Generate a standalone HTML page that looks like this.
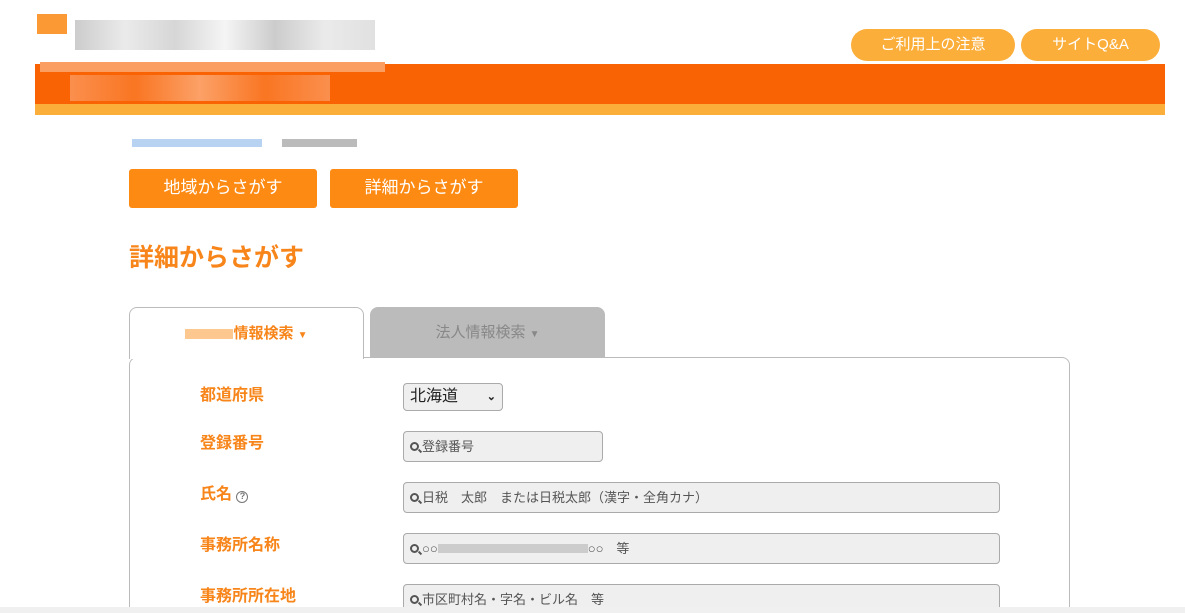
<!DOCTYPE html>
<html style="overflow:hidden;width:1185px;height:613px"><head><meta charset="utf-8"><style>
*{box-sizing:border-box;margin:0;padding:0}
body{width:1185px;height:613px;overflow:hidden;background:#fff;font-family:"Liberation Sans","Noto Sans CJK JP",sans-serif;position:relative}
.a{position:absolute}
.hb{background:#fbae3a;color:#fff;font-size:15px;border-radius:16px;text-align:center;line-height:32px;height:32px;top:29px}
.btn{background:#fc8a13;color:#fff;font-size:17px;border-radius:3px;text-align:center;line-height:37px;height:39px;top:169px;width:188px}
.lab{left:200px;color:#f7851a;font-weight:bold;font-size:16px}
.in{left:403px;border:1px solid #aaa;border-radius:4px;background:#efefef;height:31px;font-size:13px;color:#555;line-height:29px;padding-left:6px}
.in b{display:inline-block;width:9px;height:9px;border:2px solid #555;border-radius:50%;margin-right:3px;position:relative;top:0}
.in b:after{content:"";position:absolute;left:6px;top:6px;width:4px;height:2px;background:#555;transform:rotate(45deg)}
</style></head><body>
<div class="a" style="left:35px;top:64px;width:1130px;height:40px;background:#f96303"></div>
<div class="a" style="left:35px;top:104px;width:1130px;height:11px;background:#fbae3a"></div>
<div class="a" style="left:37px;top:14px;width:30px;height:20px;background:#fb9a35"></div>
<div class="a" style="left:75px;top:20px;width:300px;height:30px;background:linear-gradient(90deg,#aaa,#ddd,#bbb,#eee,#aaa,#ddd,#ccc);opacity:.6"></div>
<div class="a" style="left:40px;top:62px;width:345px;height:10px;background:#fa9e62"></div>
<div class="a" style="left:70px;top:75px;width:260px;height:26px;background:linear-gradient(90deg,#fb9a60,#f97a2a,#fcb080,#f97a2a,#fb9a60);opacity:.8"></div>
<div class="a hb" style="left:851px;width:164px">ご利用上の注意</div>
<div class="a hb" style="left:1021px;width:139px">サイトQ&amp;A</div>
<div class="a" style="left:132px;top:139px;width:130px;height:8px;background:#b8d2f2"></div>
<div class="a" style="left:282px;top:139px;width:75px;height:8px;background:#bbb"></div>
<div class="a btn" style="left:129px">地域からさがす</div>
<div class="a btn" style="left:330px">詳細からさがす</div>
<div class="a" style="left:129px;top:238px;color:#f7851a;font-size:25px;font-weight:bold">詳細からさがす</div>
<div class="a" style="left:129px;top:357px;width:941px;height:270px;border:1px solid #bbb;border-radius:8px"></div>
<div class="a" style="left:129px;top:307px;width:235px;height:52px;border:1px solid #bbb;border-bottom:none;border-radius:8px 8px 0 0;background:#fff;text-align:center;line-height:52px;color:#f7851a;font-weight:bold;font-size:15px"><span style="display:inline-block;width:48px;height:10px;background:#fcc890;vertical-align:middle"></span>情報検索 <span style="font-size:10px">▼</span></div>
<div class="a" style="left:370px;top:307px;width:235px;height:50px;border-radius:8px 8px 0 0;background:#bbb;text-align:center;line-height:52px;color:#888;font-size:15px">法人情報検索 <span style="font-size:10px">▼</span></div>
<div class="a lab" style="top:381px">都道府県</div>
<div class="a lab" style="top:429px">登録番号</div>
<div class="a lab" style="top:480px">氏名 <span style="display:inline-block;width:12px;height:12px;border:1.5px solid #777;border-radius:50%;font-size:9px;color:#777;line-height:9px;text-align:center">?</span></div>
<div class="a lab" style="top:531px">事務所名称</div>
<div class="a lab" style="top:582px">事務所所在地</div>
<div class="a in" style="top:383px;width:100px;height:28px;color:#222;font-size:16px;line-height:26px">北海道 <span style="position:absolute;right:6px;font-size:11px;font-weight:bold">⌄</span></div>
<div class="a in" style="top:431px;width:200px"><b></b>登録番号</div>
<div class="a in" style="top:482px;width:597px"><b></b>日税　太郎　または日税太郎（漢字・全角カナ）</div>
<div class="a in" style="top:533px;width:597px"><b></b>○○<span style="display:inline-block;width:150px;height:9px;background:#ccc"></span>○○　等</div>
<div class="a in" style="top:584px;width:597px"><b></b>市区町村名・字名・ビル名　等</div>
<div class="a" style="left:0;top:607px;width:1185px;height:6px;background:#f0f0f0"></div>
</body></html>
